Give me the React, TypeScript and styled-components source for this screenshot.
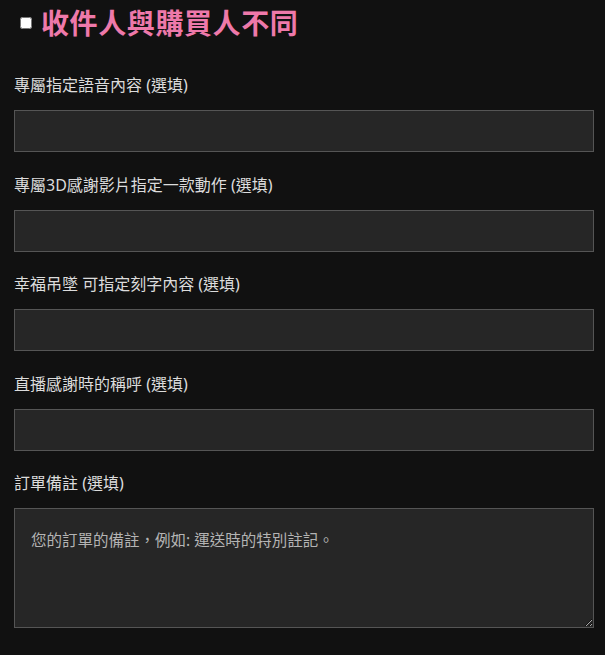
import React from 'react';
import styled, {createGlobalStyle} from "styled-components";

const GlobalStyle = createGlobalStyle`
  html, body {
    margin: 0;
    padding: 0;
    background-color: #111111;
  }

  body {
    font-family: "Noto Sans", "Noto Sans CJK TC", sans-serif;
    color: #dddddd;
  }
`

const Page = styled.div`
  width: 580px;
  padding: 0 11px 26px 14px;
  min-height: 655px;
  box-sizing: content-box;
`

const Heading = styled.h3`
  display: flex;
  align-items: center;
  gap: 9px;
  margin: 0 0 30px 0;
  padding-left: 6px;
  height: 43px;
  font-size: 28px;
  font-weight: 700;
  letter-spacing: 0.6px;
  color: #ee79aa;
  font-family: "Noto Sans CJK TC", sans-serif;
`

const Checkbox = styled.input`
  width: 12px;
  height: 12px;
  margin: 2px 0 0 0;
`

const Field = styled.div<{ $last?: boolean }>`
  display: flex;
  flex-direction: column;
  gap: 13px;
  margin-bottom: ${({$last}) => $last ? '0' : '20.5px'};
`

const Label = styled.label`
  font-size: 16px;
  line-height: 24px;
  color: #dcdcdc;
`

const TextInput = styled.input`
  height: 42px;
  width: 100%;
  box-sizing: border-box;
  background-color: #262626;
  border: 1px solid #555555;
  color: #dddddd;
  padding: 0 16px;
  font: inherit;
  outline: none;
`

const TextArea = styled.textarea`
  height: 120px;
  width: 100%;
  box-sizing: border-box;
  background-color: #262626;
  border: 1px solid #555555;
  color: #dddddd;
  padding: 20px 16px;
  font-family: inherit;
  font-size: 15.5px;
  line-height: 22px;
  outline: none;

  &::placeholder {
    color: #b4b4b4;
  }
`

const fields = [
    '專屬指定語音內容 (選填)',
    '專屬3D感謝影片指定一款動作 (選填)',
    '幸福吊墜 可指定刻字內容 (選填)',
    '直播感謝時的稱呼 (選填)',
]

const App = () => {
    return (
        <Page>
            <GlobalStyle/>
            <Heading>
                <Checkbox type="checkbox"/>
                <span>收件人與購買人不同</span>
            </Heading>
            {fields.map((label, i) => (
                <Field key={i}>
                    <Label htmlFor={`field-${i}`}>{label}</Label>
                    <TextInput id={`field-${i}`} type="text"/>
                </Field>
            ))}
            <Field $last>
                <Label htmlFor="order-note">訂單備註 (選填)</Label>
                <TextArea id="order-note" placeholder="您的訂單的備註，例如: 運送時的特別註記。"/>
            </Field>
        </Page>
    )
};

export default App;
